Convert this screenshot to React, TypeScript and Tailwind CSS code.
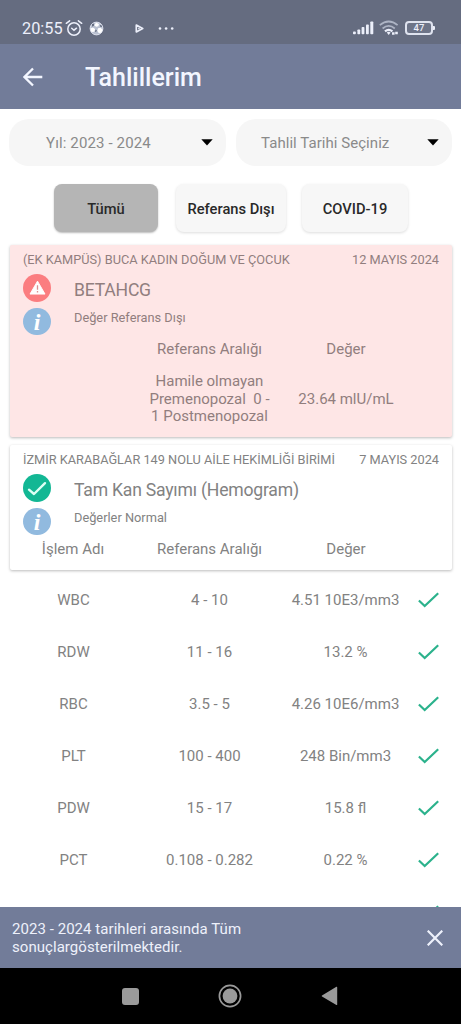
import React from "react";

const rows = [
  ["WBC", "4 - 10", "4.51 10E3/mm3"],
  ["RDW", "11 - 16", "13.2 %"],
  ["RBC", "3.5 - 5", "4.26 10E6/mm3"],
  ["PLT", "100 - 400", "248 Bin/mm3"],
  ["PDW", "15 - 17", "15.8 fl"],
  ["PCT", "0.108 - 0.282", "0.22 %"],
  ["NEU", "40 - 70", "54.8 %"],
];

function StatusBar() {
  return (
    <div className="flex h-[44px] shrink-0 items-end bg-[#656c80] pb-[5px] pl-[22px] pr-[26px] text-[#eceffa]">
      <span className="h-[21px] w-[43px] whitespace-nowrap text-[16.3px] leading-[22px]">20:55</span>
      <svg className="mb-[2px] h-[18px] w-[18px]" viewBox="0 0 18 18" fill="none" stroke="currentColor" strokeWidth="1.5" strokeLinecap="round">
        <circle cx="9" cy="10" r="6.2" />
        <path d="M1.3 4.3 4.6 1.8M16.7 4.3 13.4 1.8M6.7 9.2 9 11.2l2.5-2" />
      </svg>
      <svg className="mb-[3px] ml-[6px] h-[15px] w-[15px]" viewBox="0 0 15 15">
        <circle cx="7.5" cy="7.5" r="6.4" fill="#b9c0d0" stroke="#eceffa" strokeWidth="0.8" />
        <path d="M7 1.5l3 1.4-.6 2.4-2.3.5-1.8-1.6zM1.3 7.5l2.6-1 2.2 1.6-.7 2.6-2.9.4zM9 7.3l2.8-.6 1.8 2-1.3 3-2.6.3-1.4-2.2z" fill="#fff" />
        <path d="M3 3.2l1.8-.8.2 2-1.8 1.4zM10.8 4l1.8.4.4 1.5-1.7-.2zM6.8 8.4l1 1.1-.8 1.6-1-.6z" fill="#5c6478" />
      </svg>
      <svg className="mb-[6px] ml-[31px] h-[9px] w-[9px]" viewBox="0 0 9 9" fill="none" stroke="currentColor" strokeWidth="1.7" strokeLinejoin="round">
        <path d="M1.3 1.1 7.7 4.5 1.3 7.9z" />
        <path d="M3.2 4.5h1.5" />
      </svg>
      <svg className="mb-[9px] ml-[14px] h-[3px] w-[17px]" viewBox="0 0 17 3" fill="currentColor">
        <circle cx="2" cy="1.5" r="1.3" />
        <circle cx="8.1" cy="1.5" r="1.3" />
        <circle cx="14.2" cy="1.5" r="1.3" />
      </svg>
      <div className="flex-1" />
      <svg className="mb-[4px] h-[14px] w-[21px]" viewBox="0 0 21 14" fill="currentColor">
        <rect x="0" y="10.5" width="2.8" height="2.8" rx=".8" />
        <rect x="4.4" y="8.5" width="2.8" height="4.8" rx=".8" />
        <rect x="8.6" y="6" width="2.8" height="7.3" rx=".8" />
        <rect x="13" y="3.5" width="2.8" height="9.8" rx=".8" />
        <rect x="17.3" y="0.5" width="3" height="12.8" rx=".8" />
      </svg>
      <svg className="mb-[3px] ml-[5px] h-[16px] w-[20px]" viewBox="0 0 20 16" fill="none" strokeWidth="1.7">
        <path d="M.8 5.2Q9.7-2.2 18.6 5.2" stroke="#adb4c4" />
        <path d="M3.6 8.5Q9.7 3.2 15.8 8.5" stroke="#adb4c4" />
        <path d="M6 11.4Q9.7 8.2 13.4 11.4" stroke="#eceffa" strokeWidth="2.2" />
        <path d="M7.8 12.5Q9.7 11 11.6 12.5L9.7 15z" fill="#eceffa" />
        <path d="M13 13.5h2.6M16.2 13h2.6" stroke="#eceffa" strokeWidth="2.4" />
      </svg>
      <div className="mb-[4px] ml-[6px] flex h-[14px] w-[28px] items-center justify-center rounded-[4px] border-2 border-[#dfe3ef] bg-[#6d7488] text-[9.5px] font-medium leading-none">47</div>
      <div className="mb-[9px] h-[4px] w-[2px] rounded-r-[1px] bg-[#eceffa]" />
    </div>
  );
}

function Info() {
  return (
    <div className="flex h-[27px] w-[28px] items-center justify-center rounded-full bg-[#91badf]">
      <span className="font-['Liberation_Serif',serif] text-[24px] font-bold italic leading-[24px] text-white">i</span>
    </div>
  );
}

function Warning() {
  return (
    <div className="flex h-[28px] w-[28px] items-center justify-center rounded-full bg-[#fb7d80]">
      <svg viewBox="0 0 18 16" className="mb-[2px] h-[15px] w-[17px]">
        <path d="M9 1.2 17 15H1z" fill="#fff" stroke="#fff" strokeLinejoin="round" />
        <path d="M9 5.5v4.8M9 11.8v1.5" stroke="#dc8f91" strokeWidth="1.4" />
      </svg>
    </div>
  );
}

function Success() {
  return (
    <div className="flex h-[28px] w-[28px] items-center justify-center rounded-full bg-[#12b794]">
      <svg viewBox="0 0 20 16" className="mt-[2px] h-[16px] w-[20px]" fill="none" stroke="#dcfff5" strokeWidth="2.4" strokeLinecap="round" strokeLinejoin="round">
        <path d="M2 8.7 7 13 18 2.2" />
      </svg>
    </div>
  );
}

function Check() {
  return (
    <svg viewBox="0 0 22 16" className="ml-[5px] h-[16px] w-[22px]" fill="none" stroke="#2bb28c" strokeWidth="2.2">
      <path d="M.9 8.5 6.7 14 20.2 1.2" />
    </svg>
  );
}

function Select({ label, className }: { label: string; className: string }) {
  return (
    <button className={`flex h-[47px] items-center rounded-[20px] bg-[#f6f6f6] pr-[13px] text-[15px] text-[#8a8a8a] ${className}`}>
      <span className="flex-1 whitespace-nowrap pt-[2px] text-left">{label}</span>
      <svg viewBox="0 0 12 7" className="h-[7px] w-[12px]" fill="#000">
        <path d="M.3.3h11.4L6 6.5z" />
      </svg>
    </button>
  );
}

interface CardHeadProps {
  place: string;
  date: string;
  title: string;
  note: string;
  icon: React.ReactNode;
}

function CardHead({ place, date, title, note, icon }: CardHeadProps) {
  return (
    <>
      <div className="flex h-[29px] items-center justify-between whitespace-nowrap pl-[13px] pr-[13px] pt-px text-[12.75px]">
        <span>{place}</span>
        <span>{date}</span>
      </div>
      <div className="flex pl-[13px]">
        <div className="flex w-[28px] flex-col gap-[6px]">
          {icon}
          <Info />
        </div>
        <div className="flex flex-col pl-[23px]">
          <span className="h-[32px] text-[17.6px] leading-[33px] tracking-[-0.22px]">{title}</span>
          <span className="text-[12.8px] leading-[24px]">{note}</span>
        </div>
      </div>
    </>
  );
}

export default function App() {
  return (
    <div className="flex h-[1024px] w-[461px] flex-col overflow-hidden bg-white font-['Roboto',sans-serif] text-[#828282]">
      <StatusBar />
      <header className="flex h-[65px] shrink-0 items-center bg-[#727c99] text-[#f3f6ff]">
        <svg viewBox="0 0 20 20" className="ml-[23px] h-[20px] w-[20px]" fill="none" stroke="currentColor" strokeWidth="2.3">
          <path d="M19.3 10H2M10 1.5 1.5 10l8.5 8.5" />
        </svg>
        <h1 className="ml-[42px] pt-[2px] text-[25px] font-medium leading-[30px]">Tahlillerim</h1>
      </header>
      <main className="min-h-0 flex-1 overflow-hidden">
        <div className="flex h-[75px] gap-[10px] pl-[9px] pt-[10px]">
          <Select label="Yıl: 2023 - 2024" className="w-[217px] pl-[37px] tracking-[0.13px]" />
          <Select label="Tahlil Tarihi Seçiniz" className="w-[216px] pl-[25px] tracking-[0.05px]" />
        </div>
        <div className="flex h-[61px] pl-[54px] text-[14.7px] font-medium text-[#292929]">
          <button className="h-[48px] w-[104px] rounded-[8px] bg-[#b5b5b5] pt-[3px] shadow-[0_1px_2px_#bbb]">Tümü</button>
          <button className="ml-[18px] h-[48px] w-[110px] whitespace-nowrap rounded-[8px] bg-[#f7f7f7] pt-[3px] shadow-[0_1px_3px_#ddd]">Referans Dışı</button>
          <button className="ml-[16px] h-[48px] w-[106px] rounded-[8px] bg-[#f7f7f7] pt-[3px] shadow-[0_1px_3px_#ddd]">COVID-19</button>
        </div>
        <section className="ml-[10px] h-[192px] w-[442px] rounded-[2px] bg-[#fee6e6] text-[#917e7e] shadow-[0_1px_3px_#bbb]">
          <CardHead place="(EK KAMPÜS) BUCA KADIN DOĞUM VE ÇOCUK" date="12 MAYIS 2024" title="BETAHCG" note="Değer Referans Dışı" icon={<Warning />} />
          <div className="mt-[2px] flex h-[24px] items-center pl-[131px] text-center text-[15px]">
            <span className="w-[137px]">Referans Aralığı</span>
            <span className="w-[136px]">Değer</span>
          </div>
          <div className="mt-[12px] flex items-center pl-[131px] text-center text-[15px] leading-[17.5px]">
            <span className="w-[137px] whitespace-pre">{"Hamile olmayan\nPremenopozal  0 -\n1 Postmenopozal"}</span>
            <span className="w-[136px]">23.64 mlU/mL</span>
          </div>
        </section>
        <section className="ml-[10px] mt-[8px] h-[125px] w-[442px] rounded-[2px] bg-white shadow-[0_1px_3px_#bbb]">
          <CardHead place="İZMİR KARABAĞLAR 149 NOLU AİLE HEKİMLİĞİ BİRİMİ" date="7 MAYIS 2024" title="Tam Kan Sayımı (Hemogram)" note="Değerler Normal" icon={<Success />} />
          <div className="flex h-[28px] items-center text-center text-[15px]">
            <span className="w-[126px]">İşlem Adı</span>
            <span className="ml-[5px] w-[137px]">Referans Aralığı</span>
            <span className="w-[136px]">Değer</span>
          </div>
        </section>
        <div className="pt-[4px]">
          {rows.map(([name, range, value]) => (
            <div key={name} className="flex h-[52px] items-center pl-[6px] text-center text-[15px] last:pt-[2px]">
              <span className="w-[135px] pt-[1px]">{name}</span>
              <span className="w-[137px] pt-[1px]">{range}</span>
              <span className="w-[135px] pt-[1px]">{value}</span>
              <Check />
            </div>
          ))}
        </div>
      </main>
      <div className="flex h-[61px] shrink-0 items-center justify-between bg-[#727c99] pl-[12px] pr-[18px] text-[15px] leading-[17.5px] text-[#eef1fb]">
        <p className="pt-[2px] tracking-[0.05px]">2023 - 2024 tarihleri arasında Tüm<br />sonuçlargösterilmektedir.</p>
        <svg viewBox="0 0 16 16" className="h-[16px] w-[16px]" fill="none" stroke="currentColor" strokeWidth="2.2">
          <path d="M.7.7l14.6 14.6M15.3.7.7 15.3" />
        </svg>
      </div>
      <nav className="flex h-[56px] shrink-0 items-center bg-black pl-[122px]">
        <div className="h-[17px] w-[17px] rounded-[3px] bg-[#9a9a9a]" />
        <svg viewBox="0 0 24 24" className="ml-[79px] h-[24px] w-[24px]">
          <circle cx="12" cy="12" r="10.6" fill="none" stroke="#9a9a9a" strokeWidth="1.7" />
          <circle cx="12" cy="12" r="7.4" fill="#9a9a9a" />
        </svg>
        <svg viewBox="0 0 17 20" className="ml-[79px] h-[20px] w-[17px]" fill="#9a9a9a">
          <path d="M1 9.5 15.4.8q.8-.3.8.6v17q0 .9-.8.5L1 10.4q-.7-.4 0-.9z" />
        </svg>
      </nav>
    </div>
  );
}
